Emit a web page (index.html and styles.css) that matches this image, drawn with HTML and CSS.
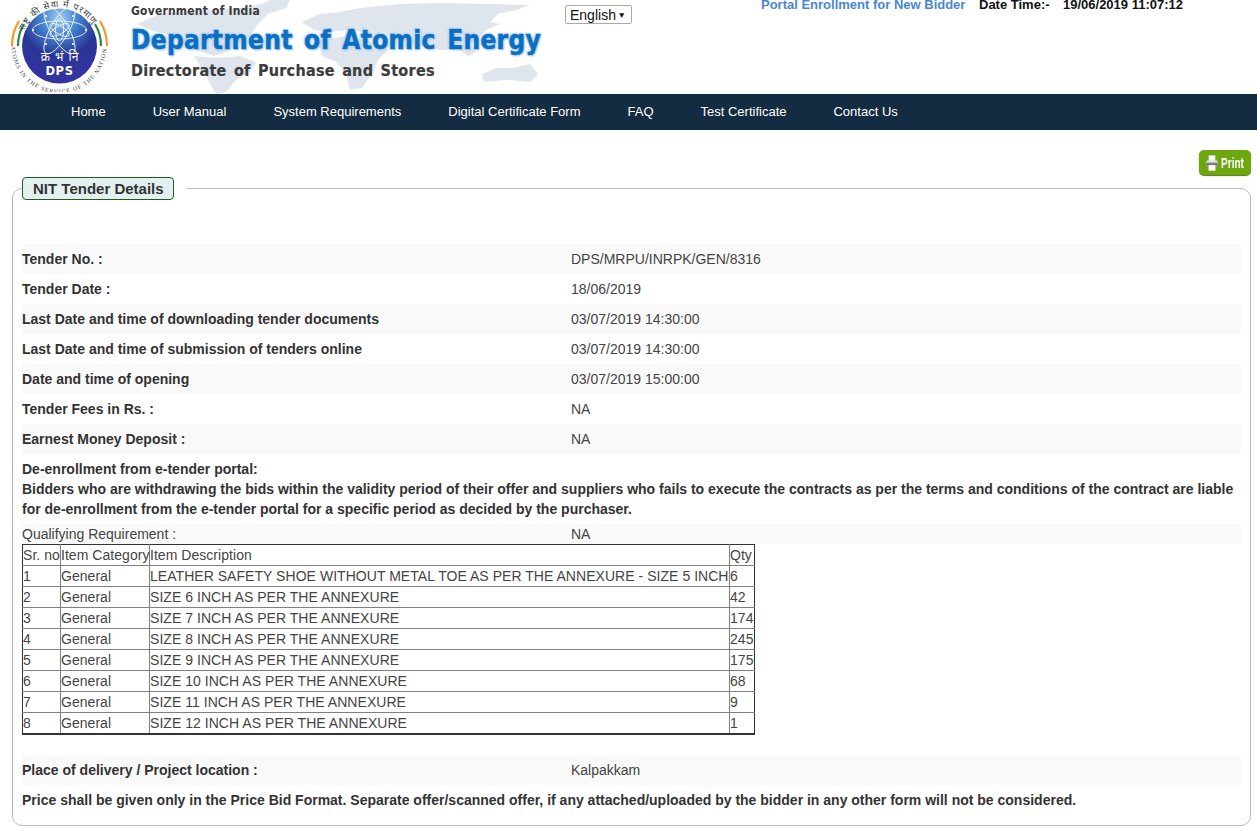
FILE: index.html
```html
<!DOCTYPE html>
<html lang="en">
<head>
<meta charset="utf-8">
<title>NIT Tender Details</title>
<link rel="stylesheet" href="styles.css">
</head>
<body>
<header class="masthead">
  <svg class="map" viewBox="125 0 420 94" aria-hidden="true">
    <g fill="#dfe5ed">
      <path d="M137 24 L160 14 L200 10 L240 8 L262 4 L270 0 L290 0 L286 8 L268 14 L258 24 L250 36 L236 46 L226 52 L214 56 L196 50 L180 42 L166 34 L150 30 Z"/>
      <path d="M194 56 L216 58 L240 56 L256 62 L250 72 L236 80 L226 92 L216 94 L210 84 L204 72 Z"/>
      <path d="M302 22 L320 14 L340 12 L360 8 L400 4 L440 3 L490 4 L530 5 L516 10 L498 14 L490 22 L500 24 L486 30 L478 38 L470 44 L476 52 L468 56 L460 50 L440 50 L424 46 L410 44 L395 36 L372 34 L350 30 L330 32 L314 30 Z"/>
      <path d="M318 40 L350 36 L372 42 L388 50 L378 60 L372 74 L362 88 L350 90 L346 74 L336 62 L322 56 Z"/>
      <path d="M482 74 L496 68 L512 68 L530 64 L538 74 L530 82 L508 80 L484 82 Z"/>
    </g>
  </svg>
  <svg class="logo" viewBox="0 0 106 92" role="img" aria-label="DPS logo">
    <defs>
      <radialGradient id="orb" cx=".5" cy=".12" r=".95">
        <stop offset="0" stop-color="#9bcdf2"/>
        <stop offset=".28" stop-color="#3f7cca"/>
        <stop offset=".55" stop-color="#2a3596"/>
        <stop offset="1" stop-color="#3733a4"/>
      </radialGradient>
      <path id="topArc" d="M14 31 A39 39 0 0 1 86 31"/>
      <path id="botArc" d="M1.5 46 A47.5 47.5 0 0 0 96.5 46"/>
    </defs>
    <circle cx="49.5" cy="46" r="37.5" fill="url(#orb)"/>
    <g fill="none" stroke="#fff" stroke-width=".8">
      <ellipse cx="49.5" cy="30" rx="27" ry="9"/>
      <ellipse cx="49.5" cy="30" rx="27" ry="9" transform="rotate(60 49.5 30)"/>
      <ellipse cx="49.5" cy="30" rx="27" ry="9" transform="rotate(120 49.5 30)"/>
      <ellipse cx="49.5" cy="30" rx="11" ry="4" transform="rotate(30 49.5 30)"/>
      <ellipse cx="49.5" cy="30" rx="11" ry="4" transform="rotate(90 49.5 30)"/>
      <ellipse cx="49.5" cy="30" rx="11" ry="4" transform="rotate(150 49.5 30)"/>
    </g>
    <g fill="#fff">
      <circle cx="36" cy="16" r="1.1"/><circle cx="63" cy="16" r="1.1"/>
      <circle cx="23" cy="30" r="1.1"/><circle cx="76" cy="30" r="1.1"/>
      <circle cx="36" cy="44" r="1.1"/><circle cx="63" cy="44" r="1.1"/>
    </g>
    <g fill="none" stroke-width="2.2">
      <path d="M2 46 A47.5 47.5 0 0 1 9 21" stroke="#f39a2c"/>
      <path d="M8 46 A41.5 41.5 0 0 1 14 24" stroke="#2a8a3a"/>
      <path d="M91 46 A41.5 41.5 0 0 0 85 24" stroke="#2a8a3a"/>
      <path d="M97 46 A47.5 47.5 0 0 0 90 21" stroke="#f39a2c"/>
    </g>
    <text class="logo-hi" font-size="9"><textPath href="#topArc" textLength="84">राष्ट्र की सेवा में परमाणु</textPath></text>
    <text class="logo-en" font-size="6"><textPath href="#botArc" textLength="146">ATOMS IN THE SERVICE OF THE NATION</textPath></text>
    <text class="logo-dev" x="49.5" y="61" text-anchor="middle" font-size="12">क्र भं नि</text>
    <text class="logo-dps" x="49.5" y="75" text-anchor="middle" font-size="11.5">DPS</text>
  </svg>
  <div class="titles">
    <div class="gov">Government of India</div>
    <div class="dept">Department of Atomic Energy</div>
    <div class="dir">Directorate of Purchase and Stores</div>
  </div>
  <div class="lang"><span>English</span><span class="caret">▼</span></div>
  <div class="topright">
    <a class="enroll" href="#">Portal Enrollment for New Bidder</a>
    <span class="dt-label">Date Time:-</span>
    <span class="dt-value">19/06/2019 11:07:12</span>
  </div>
</header>

<nav class="mainnav">
  <a href="#">Home</a>
  <a href="#">User Manual</a>
  <a href="#">System Requirements</a>
  <a href="#">Digital Certificate Form</a>
  <a href="#">FAQ</a>
  <a href="#">Test Certificate</a>
  <a href="#">Contact Us</a>
</nav>

<div class="toolbar">
  <a class="print" href="#">
    <svg viewBox="0 0 14 18" width="12" height="16" aria-hidden="true">
      <rect x="3.5" y="0.5" width="7" height="6" fill="#fff" stroke="#ddd"/>
      <path d="M1.5 6h11a1 1 0 0 1 1 1v6H.5V7a1 1 0 0 1 1-1z" fill="#e8e8e8"/>
      <rect x="0.5" y="8.5" width="13" height="4.5" fill="#7d7d7d"/>
      <rect x="3" y="11.5" width="8" height="6.5" fill="#fff"/>
    </svg>
    <span>Print</span>
  </a>
</div>

<fieldset class="panel">
  <legend class="panel-legend"><span class="panel-title">NIT Tender Details</span></legend>
  <div class="rows">
    <div class="row"><b>Tender No. :</b><span>DPS/MRPU/INRPK/GEN/8316</span></div>
    <div class="row"><b>Tender Date :</b><span>18/06/2019</span></div>
    <div class="row"><b>Last Date and time of downloading tender documents</b><span>03/07/2019 14:30:00</span></div>
    <div class="row"><b>Last Date and time of submission of tenders online</b><span>03/07/2019 14:30:00</span></div>
    <div class="row"><b>Date and time of opening</b><span>03/07/2019 15:00:00</span></div>
    <div class="row"><b>Tender Fees in Rs. :</b><span>NA</span></div>
    <div class="row"><b>Earnest Money Deposit :</b><span>NA</span></div>
  </div>
  <p class="notice">De-enrollment from e-tender portal:<br>Bidders who are withdrawing the bids within the validity period of their offer and suppliers who fails to execute the contracts as per the terms and conditions of the contract are liable for de-enrollment from the e-tender portal for a specific period as decided by the purchaser.</p>
  <div class="row row-short"><span>Qualifying Requirement :</span><span>NA</span></div>
  <table class="items">
    <colgroup><col class="c1"><col class="c2"><col class="c3"><col class="c4"></colgroup>
    <tr><td>Sr. no</td><td>Item Category</td><td>Item Description</td><td>Qty</td></tr>
    <tr><td>1</td><td>General</td><td>LEATHER SAFETY SHOE WITHOUT METAL TOE AS PER THE ANNEXURE - SIZE 5 INCH</td><td>6</td></tr>
    <tr><td>2</td><td>General</td><td>SIZE 6 INCH AS PER THE ANNEXURE</td><td>42</td></tr>
    <tr><td>3</td><td>General</td><td>SIZE 7 INCH AS PER THE ANNEXURE</td><td>174</td></tr>
    <tr><td>4</td><td>General</td><td>SIZE 8 INCH AS PER THE ANNEXURE</td><td>245</td></tr>
    <tr><td>5</td><td>General</td><td>SIZE 9 INCH AS PER THE ANNEXURE</td><td>175</td></tr>
    <tr><td>6</td><td>General</td><td>SIZE 10 INCH AS PER THE ANNEXURE</td><td>68</td></tr>
    <tr><td>7</td><td>General</td><td>SIZE 11 INCH AS PER THE ANNEXURE</td><td>9</td></tr>
    <tr><td>8</td><td>General</td><td>SIZE 12 INCH AS PER THE ANNEXURE</td><td>1</td></tr>
  </table>
  <div class="row row-place"><b>Place of delivery / Project location :</b><span>Kalpakkam</span></div>
  <p class="closing">Price shall be given only in the Price Bid Format. Separate offer/scanned offer, if any attached/uploaded by the bidder in any other form will not be considered.</p>
</fieldset>
</body>
</html>
```
FILE: styles.css
```css
* { box-sizing: border-box; }
html, body { margin: 0; height: 827px; overflow: hidden; }
body { font-family: "Liberation Sans", Arial, sans-serif; font-size: 14px; color: #444; background: #fff; }

.masthead { position: relative; display: flex; align-items: flex-start; height: 94px; overflow: hidden; }
.map { position: absolute; left: 125px; top: 0; width: 420px; height: 94px; filter: blur(.6px); }
.logo { position: relative; flex: none; width: 106px; height: 92px; margin-left: 10px; }
.logo-hi { fill: #444; font-family: "Noto Sans", "DejaVu Sans", sans-serif; }
.logo-en { fill: #444; font-family: "Liberation Serif", serif; }
.logo-dev { fill: #fff; font-family: "Noto Sans", "DejaVu Sans", sans-serif; word-spacing: 2px; }
.logo-dps { fill: #fff; font-family: "DejaVu Sans", sans-serif; font-weight: 700; letter-spacing: .6px; }

.titles { position: relative; flex: none; width: 434px; margin-left: 15px; font-family: "DejaVu Sans Condensed", "DejaVu Sans", sans-serif; font-stretch: condensed; font-weight: 700; white-space: nowrap; }
.gov { font-size: 12px; line-height: 14px; margin-top: 4px; color: #3a3a3a; letter-spacing: .2px; }
.dept { font-size: 26px; line-height: 32px; margin-top: 6px; color: #0a6fc2; letter-spacing: .3px; word-spacing: 3px; -webkit-text-stroke: .5px #0a6fc2; text-shadow: 1px 0 0 #cfe3f6, -1px 0 0 #cfe3f6, 0 1px 0 #cfe3f6, 0 -1px 0 #cfe3f6, 1px 1px 2px #7fa6d2, -1px -1px 2px #a9c8e8; }
.dir { font-size: 16px; line-height: 20px; margin-top: 5px; color: #3c3c3c; letter-spacing: .28px; word-spacing: 2px; -webkit-text-stroke: .2px #3c3c3c; }

.lang { position: relative; flex: none; display: flex; align-items: center; justify-content: space-between; width: 67px; height: 19px; margin-top: 5px; padding: 0 5px 0 4px; border: 1px solid #a9a9a9; border-radius: 2px; background: #fff; color: #111; font-size: 14px; }
.caret { font-size: 8.5px; }

.topright { position: relative; flex: none; display: flex; margin-left: 129px; margin-top: -3px; font-size: 13px; line-height: 15px; font-weight: 700; white-space: nowrap; }
.enroll { width: 218px; color: #4a86d0; text-decoration: none; }
.dt-label { width: 84px; color: #111; }
.dt-value { color: #111; }

.mainnav { display: flex; gap: 47px; height: 36px; padding: 0 0 2px 71px; align-items: center; background: #132c41; }
.mainnav a { color: #fff; text-decoration: none; font-size: 13px; white-space: nowrap; }

.toolbar { display: flex; justify-content: flex-end; padding: 20px 6px 0 0; height: 47px; }
.print { display: flex; align-items: center; gap: 3px; width: 52px; height: 25px; padding-left: 7px; border-radius: 5px; background: #6ea60e; box-shadow: 0 1px 1px #4d7a08; color: #fff; text-decoration: none; font-weight: 700; font-size: 14px; }
.print span { display: inline-block; transform: scaleX(.72); transform-origin: left center; width: 24px; }

.panel { display: block; margin: 0 6px 0 12px; padding: 0 9px; height: 649px; min-width: 0; border: 1px solid #bbb; border-radius: 10px; }
.panel-legend { display: block; padding: 0 13px 0 0; }
.panel-title { display: block; padding: 0 10px 0 10px; width: 152px; height: 23px; line-height: 22px; background: #e3f0f0; border: 1px solid #1e5c1e; border-radius: 4px; font-size: 15px; font-weight: 700; color: #333; white-space: nowrap; }

.rows { margin-top: 44px; }
.row { display: grid; grid-template-columns: 549px 1fr; align-items: center; height: 30px; color: #444; }
.row b { color: #333; }
.rows .row:nth-child(odd) { background: #f9f9f9; }

.notice { margin: 5px 0; font-weight: 700; line-height: 20px; color: #333; }
.row-short { height: 20px; background: #f9f9f9; }
.row-place { height: 30px; margin-top: 20px; background: #f9f9f9; }
.closing { margin: 5px 0 0; font-weight: 700; line-height: 20px; color: #333; }

.items { width: 732px; border-collapse: collapse; table-layout: fixed; letter-spacing: .04px; }
.items td { height: 21px; padding: 0; border: 1px solid #808080; line-height: 20px; white-space: nowrap; }
.items tr:first-child td { border-top-color: #333; }
.items tr:last-child td { border-bottom: 2px solid #333; }
.items td:first-child { border-left-color: #333; }
.items td:last-child { border-right-color: #333; }
.c1 { width: 38px; }
.c2 { width: 89px; }
.c3 { width: 580px; }
.c4 { width: 25px; }
```
